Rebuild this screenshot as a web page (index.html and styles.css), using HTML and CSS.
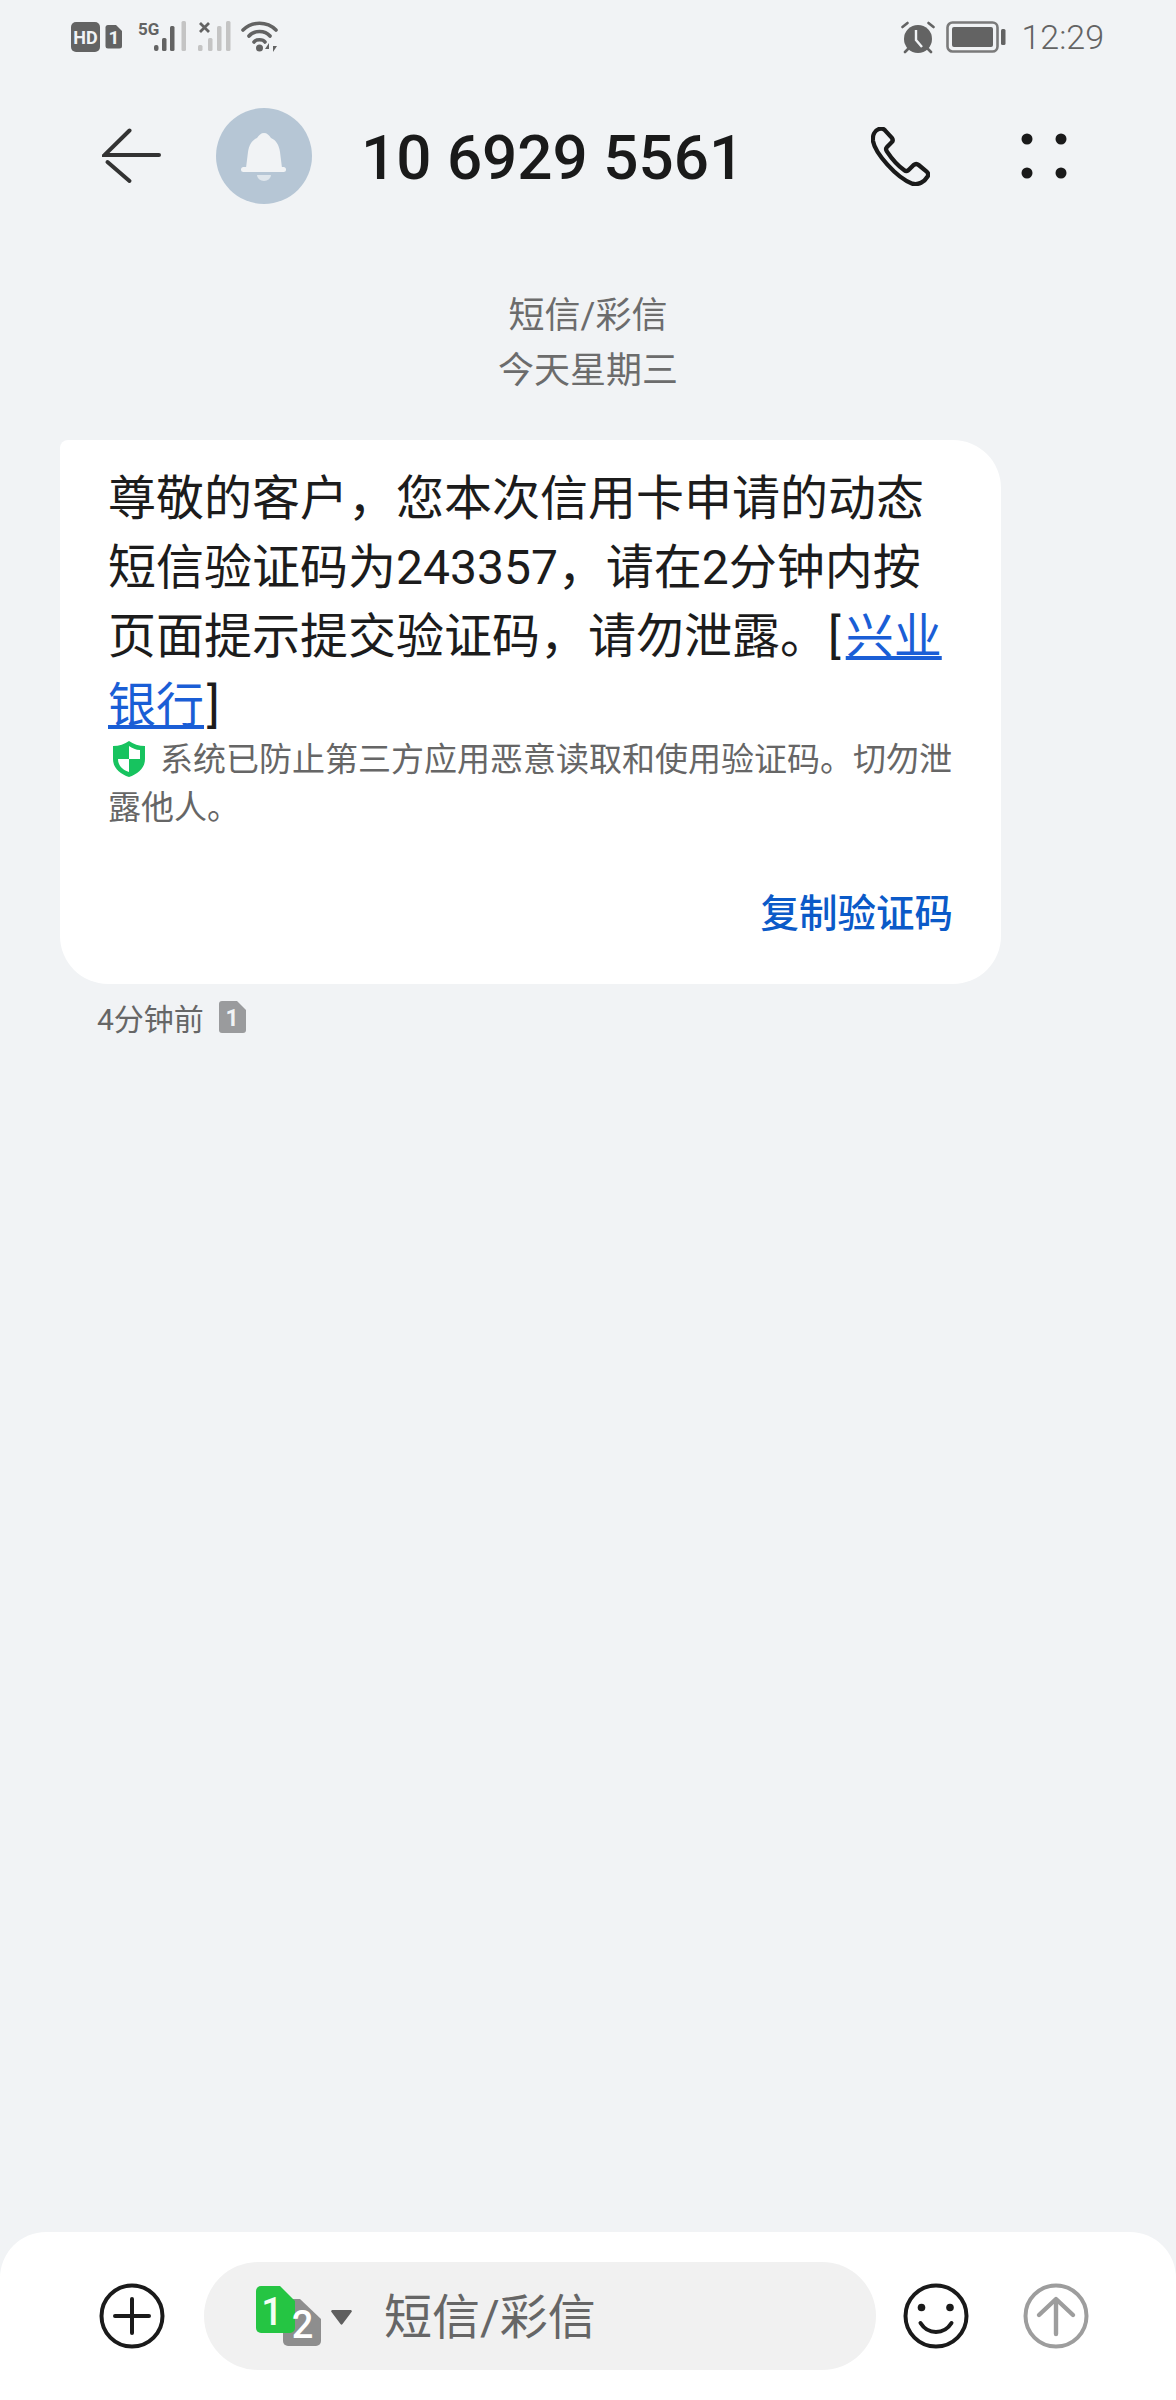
FILE: index.html
```html
<!DOCTYPE html>
<html lang="zh-CN">
<head>
<meta charset="utf-8">
<title>10 6929 5561</title>
<link rel="stylesheet" href="styles.css">
</head>
<body>
<div class="screen">
  <div class="status">
    <div class="status-left">
      <svg class="ic-hd" width="53" height="30" viewBox="0 0 53 30">
        <rect x="0" y="0" width="29" height="30" rx="5" fill="#636363"/>
        <text x="14.500" y="21.500" text-anchor="middle" class="svg-hd">HD</text>
        <path d="M37 3h8l6 6v15a2.500 2.500 0 0 1-2.500 2.500h-11.500a2.500 2.500 0 0 1-2.500-2.500v-18.500a2.500 2.500 0 0 1 2.500-2.500z" fill="#636363"/>
        <text x="43" y="22" text-anchor="middle" class="svg-sim">1</text>
      </svg>
      <svg class="ic-sig" width="48" height="32" viewBox="0 0 48 32">
        <text x="0" y="14" class="svg-5g">5G</text>
        <rect x="16" y="24" width="4.500" height="6" rx="2" fill="#636363"/>
        <rect x="24" y="17" width="4.500" height="13" rx="1.500" fill="#636363"/>
        <rect x="32" y="5" width="4.500" height="25" rx="1.500" fill="#636363"/>
        <rect x="43.500" y="0" width="4.500" height="30" rx="1.500" fill="#c4c4c4"/>
      </svg>
      <svg class="ic-sig" width="33" height="32" viewBox="0 0 33 32">
        <path d="M2 2l9 9M11 2l-9 9" stroke="#636363" stroke-width="2.800" fill="none"/>
        <rect x="0" y="24" width="4.500" height="6" rx="1.500" fill="#c4c4c4"/>
        <rect x="10" y="17" width="4.500" height="13" rx="1.500" fill="#c4c4c4"/>
        <rect x="19" y="5" width="4.500" height="25" rx="1.500" fill="#c4c4c4"/>
        <rect x="28" y="0" width="4.500" height="30" rx="1.500" fill="#c4c4c4"/>
      </svg>
      <svg class="ic-wifi" width="38" height="32" viewBox="0 0 38 32">
        <g fill="none" stroke="#636363" stroke-width="3.600" stroke-linecap="round">
          <path d="M2 9C11 0 26 0 35 9"/>
          <path d="M8 15C13 9 24 9 29 15"/>
          <path d="M13 21C15 18 22 18 24 21"/>
        </g>
        <circle cx="18.500" cy="27" r="3.500" fill="#636363"/>
        <path d="M28 31v-9l-4 6h4zM32 22v9l4-6h-4z" fill="#636363"/>
      </svg>
    </div>
    <div class="status-right">
      <svg width="34" height="33" viewBox="0 0 34 33">
        <circle cx="17" cy="18" r="14" fill="#636363"/>
        <path d="M15 9v10l6 7" fill="none" stroke="#f1f3f5" stroke-width="2.400"/>
        <path d="M1.500 6l5-4M32.500 6l-5-4M4 31l3-3M30 31l-3-3" stroke="#636363" stroke-width="2.600" fill="none" stroke-linecap="round"/>
      </svg>
      <svg class="ic-bat" width="60" height="32" viewBox="0 0 60 32">
        <rect x="1.500" y="1.500" width="50" height="29" rx="5" fill="none" stroke="#7a7a7a" stroke-width="2.600"/>
        <rect x="6" y="6" width="41" height="20" rx="2" fill="#636363"/>
        <rect x="55" y="8" width="4.500" height="16" rx="1.500" fill="#636363"/>
      </svg>
      <span class="clock">12:29</span>
    </div>
  </div>

  <header class="topbar">
    <svg class="ic-back" width="60" height="56" viewBox="0 0 60 56">
      <g fill="none" stroke="#333" stroke-width="4" stroke-linecap="round">
        <path d="M27.500 2.500L2.500 27H57"/>
        <path d="M5.500 34L27.500 53"/>
      </g>
    </svg>
    <div class="avatar">
      <svg width="96" height="96" viewBox="0 0 96 96">
        <path d="M41 30C43 27 45 25 48 25C51 25 53 27 55 30C60 32 63 37 64 44L66 60H30L32 44C33 37 36 32 41 30Z" fill="#f1f3f5"/>
        <rect x="25" y="59" width="45" height="5" rx="2.500" fill="#f1f3f5"/>
        <path d="M41 67H55A7 6 0 0 1 41 67Z" fill="#dfe6ec"/>
      </svg>
    </div>
    <div class="title">10 6929 5561</div>
    <svg class="ic-phone" width="59" height="59" viewBox="0 0 177 177">
      <path d="M24 6C12 10 4 24 6 42C12 78 76 152 124 170C142 175 160 165 170 148C173 142 172 138 167 134L143 114C138 110 133 110 128 114L112 130C108 133 104 133 100 130C80 116 60 92 48 74C44 68 44 64 48 60L62 46C66 42 66 37 62 32L42 10C36 4 30 3 24 6Z" fill="none" stroke="#1a1a1a" stroke-width="13" stroke-linejoin="round"/>
    </svg>
    <svg class="ic-more" width="46" height="46" viewBox="0 0 46 46">
      <circle cx="6" cy="6" r="5.500" fill="#1a1a1a"/>
      <circle cx="40" cy="6" r="5.500" fill="#1a1a1a"/>
      <circle cx="6" cy="40" r="5.500" fill="#1a1a1a"/>
      <circle cx="40" cy="40" r="5.500" fill="#1a1a1a"/>
    </svg>
  </header>

  <main class="thread">
    <div class="day">
      <div>短信/彩信</div>
      <div>今天星期三</div>
    </div>
    <article class="bubble">
      <p class="msg">尊敬的客户&#65292;您本次信用卡申请的动态短信验证码为243357&#65292;请在2分钟内按页面提示提交验证码&#65292;请勿泄露。[<a class="link" href="#">兴业银行</a>]</p>
      <p class="note"><svg class="ic-shield" width="32" height="36" viewBox="0 0 32 36">
          <path d="M16 0C20 3 26 5 32 5V18C32 27 25 33 16 36C7 33 0 27 0 18V5C6 5 12 3 16 0Z" fill="#17c35f"/>
          <path d="M16 5C19 7 23 9 27 9V18H16ZM16 18V31C10 29 5 25 5 18Z" fill="#fff"/>
        </svg>系统已防止第三方应用恶意读取和使用验证码。切勿泄露他人。</p>
      <div class="actions"><a class="copy" href="#">复制验证码</a></div>
    </article>
    <div class="meta">
      <span>4分钟前</span>
      <svg class="ic-simtag" width="27" height="32" viewBox="0 0 27 32">
        <path d="M3 0H18L27 9V29A3 3 0 0 1 24 32H3A3 3 0 0 1 0 29V3A3 3 0 0 1 3 0Z" fill="#9a9b9d"/>
        <text x="13" y="25" text-anchor="middle" class="svg-tag">1</text>
      </svg>
    </div>
  </main>

  <footer class="composer">
    <svg width="66" height="66" viewBox="0 0 66 66">
      <circle cx="33" cy="33" r="30.500" fill="none" stroke="#1a1a1a" stroke-width="4"/>
      <path d="M16 33H50M33 16V50" stroke="#1a1a1a" stroke-width="4" stroke-linecap="round"/>
    </svg>
    <div class="input">
      <svg class="ic-dual" width="66" height="64" viewBox="0 0 66 64">
        <path d="M32 13H44L65 33V55A5 5 0 0 1 60 60H32A5 5 0 0 1 27 55V18A5 5 0 0 1 32 13Z" fill="#8e8e8e"/>
        <path d="M5 0H24L39 15V42A5 5 0 0 1 34 47H5A5 5 0 0 1 0 42V5A5 5 0 0 1 5 0Z" fill="#25c543"/>
        <text x="16" y="39" text-anchor="middle" class="svg-one">1</text>
        <text x="46.500" y="52" text-anchor="middle" class="svg-two">2</text>
      </svg>
      <svg class="ic-caret" width="21" height="15" viewBox="0 0 21 15">
        <path d="M1.500 0H19.500A1.200 1.200 0 0 1 20.500 2L11.500 14A1.200 1.200 0 0 1 9.500 14L.5 2A1.200 1.200 0 0 1 1.500 0Z" fill="#5f5f5f"/>
      </svg>
      <span class="placeholder">短信/彩信</span>
    </div>
    <svg class="ic-emoji" width="66" height="66" viewBox="0 0 66 66">
      <circle cx="33" cy="33" r="30.500" fill="none" stroke="#1a1a1a" stroke-width="4"/>
      <circle cx="18.500" cy="24.500" r="3.800" fill="#1a1a1a"/>
      <circle cx="47" cy="24.500" r="3.800" fill="#1a1a1a"/>
      <path d="M17.500 40C25 52 41 52 48.500 40" fill="none" stroke="#1a1a1a" stroke-width="4" stroke-linecap="round"/>
    </svg>
    <svg class="ic-send" width="66" height="66" viewBox="0 0 66 66">
      <circle cx="33" cy="33" r="30.500" fill="none" stroke="#9d9d9d" stroke-width="4"/>
      <path d="M33 51V17M16 32L33 16L50 32" fill="none" stroke="#9d9d9d" stroke-width="4.400" stroke-linecap="round" stroke-linejoin="round"/>
    </svg>
  </footer>
</div>
</body>
</html>
```
FILE: styles.css
```css
* { box-sizing: border-box; }
html, body { margin: 0; padding: 0; }
body {
  background: #f1f3f5;
  font-family: Roboto, "Noto Sans CJK SC", sans-serif;
  color: #1c1c1c;
}
svg { display: block; flex: none; }

.screen {
  width: 1176px;
  height: 2400px;
  display: flex;
  flex-direction: column;
  overflow: hidden;
}

/* status bar */
.status {
  height: 74px;
  padding: 0 72px 0 71px;
  display: flex;
  align-items: center;
  justify-content: space-between;
  color: #636363;
}
.status-left { display: flex; align-items: center; }
.status-right { display: flex; align-items: center; }
.ic-hd { margin-right: 14px; }
.ic-sig { margin-right: 12px; }
.ic-wifi { margin-left: -2px; }
.ic-bat { margin-left: 11px; margin-right: 15px; }
.clock { font-size: 34px; line-height: 40px; font-weight: 300; }
.svg-hd { font: 700 18px "Liberation Sans Narrow", Roboto, sans-serif; fill: #f1f3f5; }
.svg-sim { font: 700 19px Roboto, sans-serif; fill: #f1f3f5; }
.svg-5g { font: 700 17px "Liberation Sans Narrow", Roboto, sans-serif; fill: #636363; }
.svg-tag { font: 700 23px Roboto, sans-serif; fill: #f1f3f5; }
.svg-one { font: 500 38px Roboto, sans-serif; fill: #f2fff4; }
.svg-two { font: 500 38px Roboto, sans-serif; fill: #fff; }

/* top bar */
.topbar {
  height: 164px;
  padding: 0 109px 0 102px;
  display: flex;
  align-items: center;
}
.ic-back { margin-right: 54px; }
.avatar {
  width: 96px;
  height: 96px;
  border-radius: 50%;
  background: #b6c6d5;
  margin-right: 49px;
}
.title {
  flex: 1;
  padding-top: 3px;
  font-size: 62px;
  line-height: 80px;
  font-weight: 500;
  color: #1a1a1a;
}
.ic-phone { margin-right: 91px; }

/* thread */
.thread {
  flex: 1;
  padding: 51px 60px 0;
}
.day {
  font-size: 36px;
  line-height: 55px;
  color: #6c6c6c;
  text-align: center;
}
.bubble {
  width: 941px;
  margin-top: 41px;
  padding: 24px 40px 43px 48px;
  background: #fff;
  border-radius: 8px 48px 48px 48px;
}
.msg {
  margin: 0;
  font-size: 48px;
  line-height: 69px;
  color: #1c1c1c;
}
.link {
  margin-left: 5px;
  margin-right: 3px;
  color: #1a5ed6;
  text-decoration: underline;
}
.note {
  margin: -4px 0 0;
  font-size: 33px;
  line-height: 48px;
  color: #666;
}
.ic-shield {
  display: inline-block;
  vertical-align: -6px;
  margin: 0 15px 0 5px;
}
.actions {
  margin-top: 55px;
  padding-right: 8px;
  display: flex;
  justify-content: flex-end;
}
.copy {
  font-size: 38.500px;
  line-height: 54px;
  font-weight: 500;
  color: #0b5ac8;
  text-decoration: none;
}
.meta {
  display: flex;
  align-items: center;
  height: 66px;
  padding-left: 37px;
  font-size: 30px;
  color: #666;
}
.ic-simtag { margin-left: 15px; }

/* composer */
.composer {
  height: 168px;
  padding: 0 0 0 99px;
  display: flex;
  align-items: center;
  background: #fff;
  border-radius: 46px 46px 0 0;
}
.input {
  width: 672px;
  height: 108px;
  margin-left: 39px;
  padding-left: 52px;
  display: flex;
  align-items: center;
  border-radius: 54px;
  background: #f1f1f1;
}
.ic-dual { margin-top: 4px; }
.ic-caret { margin-left: 9px; margin-top: 3px; }
.placeholder {
  margin-left: 32px;
  margin-top: 4px;
  font-size: 48px;
  line-height: 60px;
  color: #666;
}
.ic-emoji { margin-left: 27px; }
.ic-send { margin-left: 54px; }
```
